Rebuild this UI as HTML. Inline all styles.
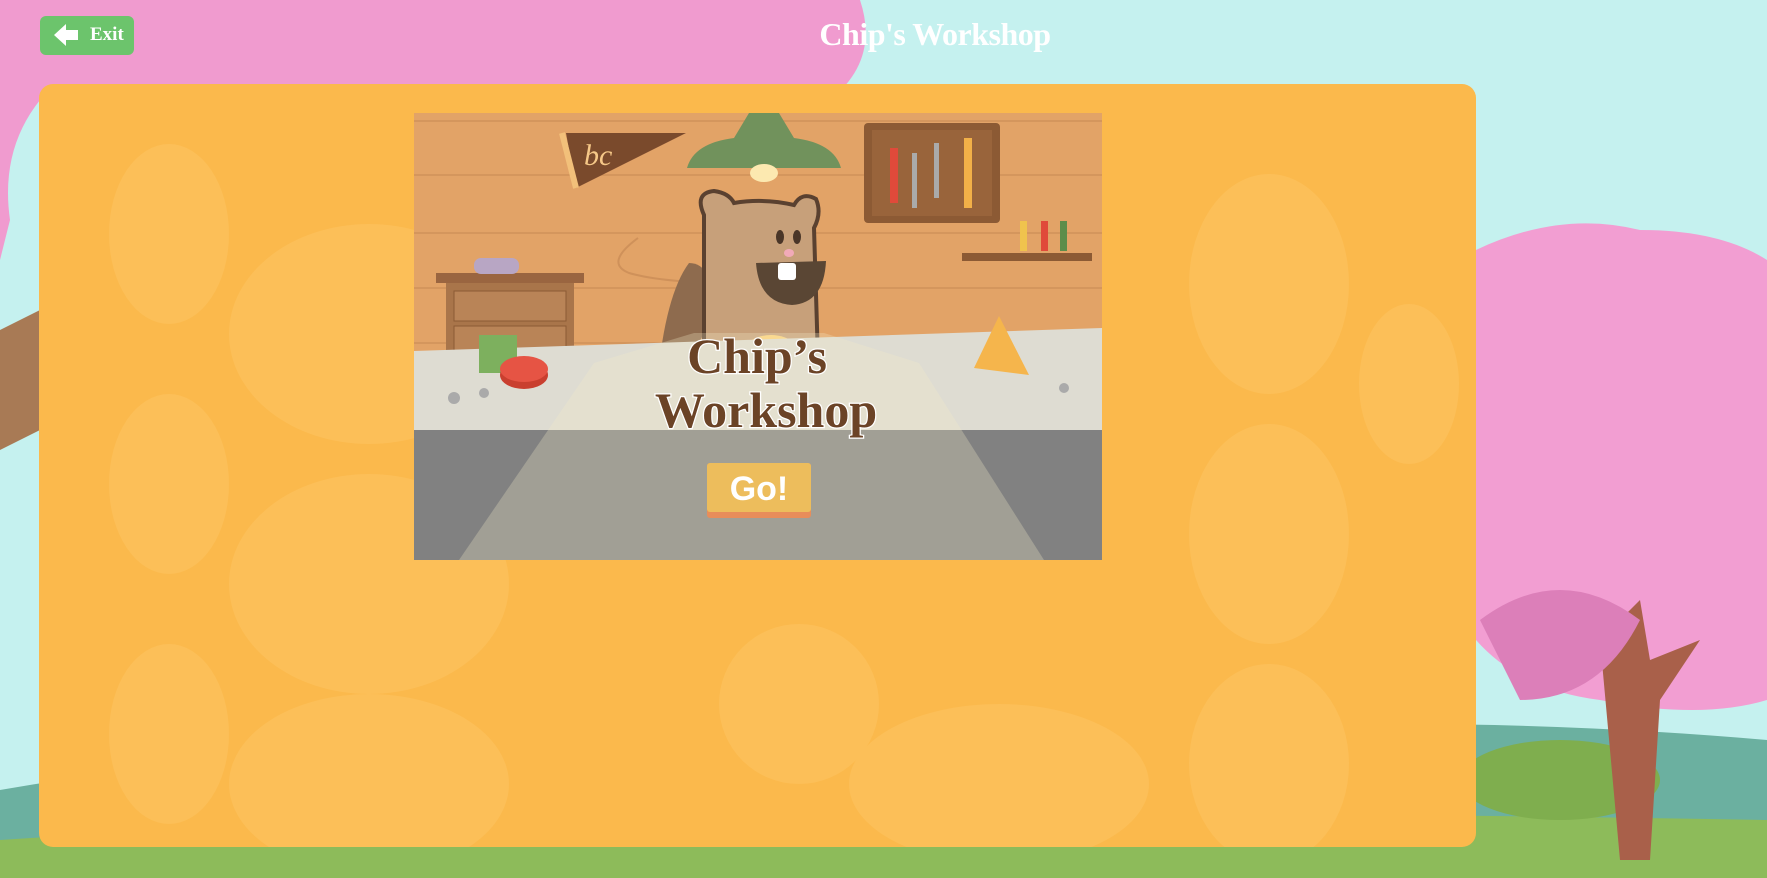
<!DOCTYPE html>
<html><head><meta charset="utf-8"><style>
html,body{margin:0;padding:0;width:1767px;height:878px;overflow:hidden;background:#c5f1ef;font-family:"Liberation Serif",serif}
.bg{position:absolute;left:0;top:0}
.exit{position:absolute;left:40px;top:16px;width:94px;height:39px;background:#6cc46c;border-radius:6px;color:#fff;font-family:"Liberation Serif",serif;font-weight:bold;font-size:19px}
.exit span{position:absolute;left:50px;top:8px}
.title{position:absolute;left:0;width:1870px;text-align:center;top:16px;color:#fff;font-size:32px;font-weight:bold;letter-spacing:-0.5px}
.panel{position:absolute;left:39px;top:84px;width:1437px;height:763px;background:#fbb94c;border-radius:14px;overflow:hidden}
.scene{position:absolute;left:414px;top:113px;width:688px;height:447px}
</style></head><body>
<svg class="bg" width="1767" height="878">
 <rect width="1767" height="878" fill="#c5f1ef"/>
 <path d="M0 790 Q400 720 900 760 Q1300 700 1767 740 L1767 878 L0 878Z" fill="#6bb0a0"/>
 <path d="M0 840 Q600 800 1767 820 L1767 878 L0 878Z" fill="#8dbb5a"/>
 <ellipse cx="1560" cy="780" rx="100" ry="40" fill="#7fae4e"/>
 <path d="M0 0 H860 Q880 60 830 100 L40 100 Q0 150 10 220 Q0 260 0 260Z" fill="#f09bcf"/>
 <path d="M0 330 L60 300 L60 420 L0 450Z" fill="#a87a55"/>
 <path d="M1476 250 Q1560 210 1640 230 Q1720 230 1767 260 L1767 700 Q1700 720 1600 700 Q1520 690 1476 640Z" fill="#f29ed2"/>
 <path d="M1600 640 L1620 860 L1650 860 L1660 700 L1700 640 L1650 660 L1640 600Z" fill="#a9604a"/>
 <path d="M1480 620 Q1560 560 1640 620 Q1600 700 1520 700Z" fill="#dc7fb9"/>
</svg>
<div class="exit"><svg width="40" height="39" style="position:absolute;left:8px;top:0"><path d="M6 19 L18 8 L18 14 L30 14 L30 24 L18 24 L18 30Z" fill="#fff"/></svg><span>Exit</span></div>
<div class="title">Chip's Workshop</div>
<div class="panel">
 <svg width="1437" height="763" style="position:absolute;left:0;top:0" fill="#fcbf58">
  <ellipse cx="130" cy="150" rx="60" ry="90"/><ellipse cx="330" cy="250" rx="140" ry="110"/><ellipse cx="130" cy="400" rx="60" ry="90"/>
  <ellipse cx="330" cy="500" rx="140" ry="110"/><ellipse cx="130" cy="650" rx="60" ry="90"/><ellipse cx="330" cy="700" rx="140" ry="90"/>
  <ellipse cx="760" cy="620" rx="80" ry="80"/><ellipse cx="960" cy="700" rx="150" ry="80"/><ellipse cx="1230" cy="200" rx="80" ry="110"/>
  <ellipse cx="1230" cy="450" rx="80" ry="110"/><ellipse cx="1230" cy="680" rx="80" ry="100"/><ellipse cx="1370" cy="300" rx="50" ry="80"/>
 </svg>
</div>
<svg class="scene" width="688" height="447" viewBox="0 0 688 447">
 <rect width="688" height="447" fill="#e2a367"/>
 <g stroke="#cf915a" stroke-width="1.5"><line x1="0" y1="8" x2="688" y2="8"/><line x1="0" y1="62" x2="688" y2="62"/><line x1="0" y1="120" x2="688" y2="120"/><line x1="0" y1="175" x2="688" y2="175"/><line x1="0" y1="230" x2="688" y2="230"/></g>
 <path d="M224 125 Q190 150 215 160 Q250 170 320 170" stroke="#cf915a" fill="none" stroke-width="2"/>
 <path d="M152 20 L272 20 L162 75Z" fill="#7a4a2c"/><path d="M148 20 L162 75" stroke="#f2c07a" stroke-width="6"/>
 <text x="170" y="52" font-size="30" font-style="italic" fill="#f6c888" font-family="Liberation Serif">bc</text>
 <path d="M273 55 Q280 30 320 25 L335 0 L365 0 L380 25 Q420 30 427 55Z" fill="#71925c"/>
 <ellipse cx="350" cy="60" rx="14" ry="9" fill="#fce9b0"/>
 <rect x="450" y="10" width="136" height="100" rx="4" fill="#8c5a34"/><rect x="458" y="17" width="120" height="86" fill="#99643b"/>
 <rect x="476" y="35" width="8" height="55" fill="#e04a3a"/><rect x="498" y="40" width="5" height="55" fill="#aaa"/><rect x="520" y="30" width="5" height="55" fill="#aaa"/><rect x="550" y="25" width="8" height="70" fill="#f2b048"/>
 <rect x="548" y="140" width="130" height="8" fill="#8c5a34"/>
 <rect x="606" y="108" width="7" height="30" fill="#f0c34d"/><rect x="627" y="108" width="7" height="30" fill="#e04a3a"/><rect x="646" y="108" width="7" height="30" fill="#5c8d4a"/>
 <rect x="22" y="160" width="148" height="10" fill="#9a6540"/><rect x="32" y="170" width="128" height="80" fill="#a9754a"/>
 <rect x="40" y="178" width="112" height="30" fill="#b98457" stroke="#8c5a34"/><rect x="40" y="213" width="112" height="30" fill="#b98457" stroke="#8c5a34"/>
 <rect x="60" y="145" width="45" height="16" rx="7" fill="#b8a6c4"/>
 <path d="M240 320 Q245 190 275 150 Q300 150 300 200Z" fill="#8e6b4e"/>
 <path d="M290 102 Q280 80 300 78 Q315 80 320 90 Q350 85 380 92 Q388 78 402 86 Q408 100 400 115 L405 280 L290 280Z" fill="#c7a07a" stroke="#5a4130" stroke-width="4"/>
 <ellipse cx="357" cy="252" rx="35" ry="30" fill="#fcd27a"/>
 <ellipse cx="366" cy="124" rx="4" ry="7" fill="#4a3628"/><ellipse cx="383" cy="124" rx="4" ry="7" fill="#4a3628"/>
 <ellipse cx="375" cy="140" rx="5" ry="4" fill="#f1aab8"/>
 <path d="M342 150 L412 148 Q410 190 378 192 Q345 190 342 150Z" fill="#5a4634"/><rect x="364" y="150" width="18" height="17" rx="3" fill="#fff"/>
 <path d="M0 238 L688 215 L688 317 L0 317Z" fill="#dedcd2"/>
 <rect x="0" y="317" width="688" height="130" fill="#818181"/>
 <path d="M180 250 L280 220 L410 220 L505 250 L630 447 L45 447Z" fill="#f6eeca" opacity="0.28"/>
 <rect x="65" y="222" width="38" height="38" fill="#7db05e"/>
 <ellipse cx="110" cy="262" rx="24" ry="14" fill="#c93f2f"/><ellipse cx="110" cy="256" rx="24" ry="13" fill="#e65444"/>
 <path d="M585 203 L560 255 L615 262Z" fill="#f5b54c"/>
 <circle cx="40" cy="285" r="6" fill="#aaa"/><circle cx="70" cy="280" r="5" fill="#aaa"/><circle cx="650" cy="275" r="5" fill="#aaa"/>
 <g font-family="Liberation Serif" font-weight="bold" fill="#6b4326" stroke="#fff" stroke-width="2.5" paint-order="stroke" text-anchor="middle">
  <text x="343" y="260" font-size="50">Chip’s</text>
  <text x="352" y="314" font-size="50">Workshop</text>
 </g>
 <rect x="293" y="350" width="104" height="55" rx="3" fill="#e88d5a"/><rect x="293" y="350" width="104" height="49" rx="3" fill="#edbd5c"/>
 <text x="345" y="387" font-size="34" text-anchor="middle" fill="#fff" font-family="Liberation Sans" font-weight="bold">Go!</text>
</svg>
</body></html>
